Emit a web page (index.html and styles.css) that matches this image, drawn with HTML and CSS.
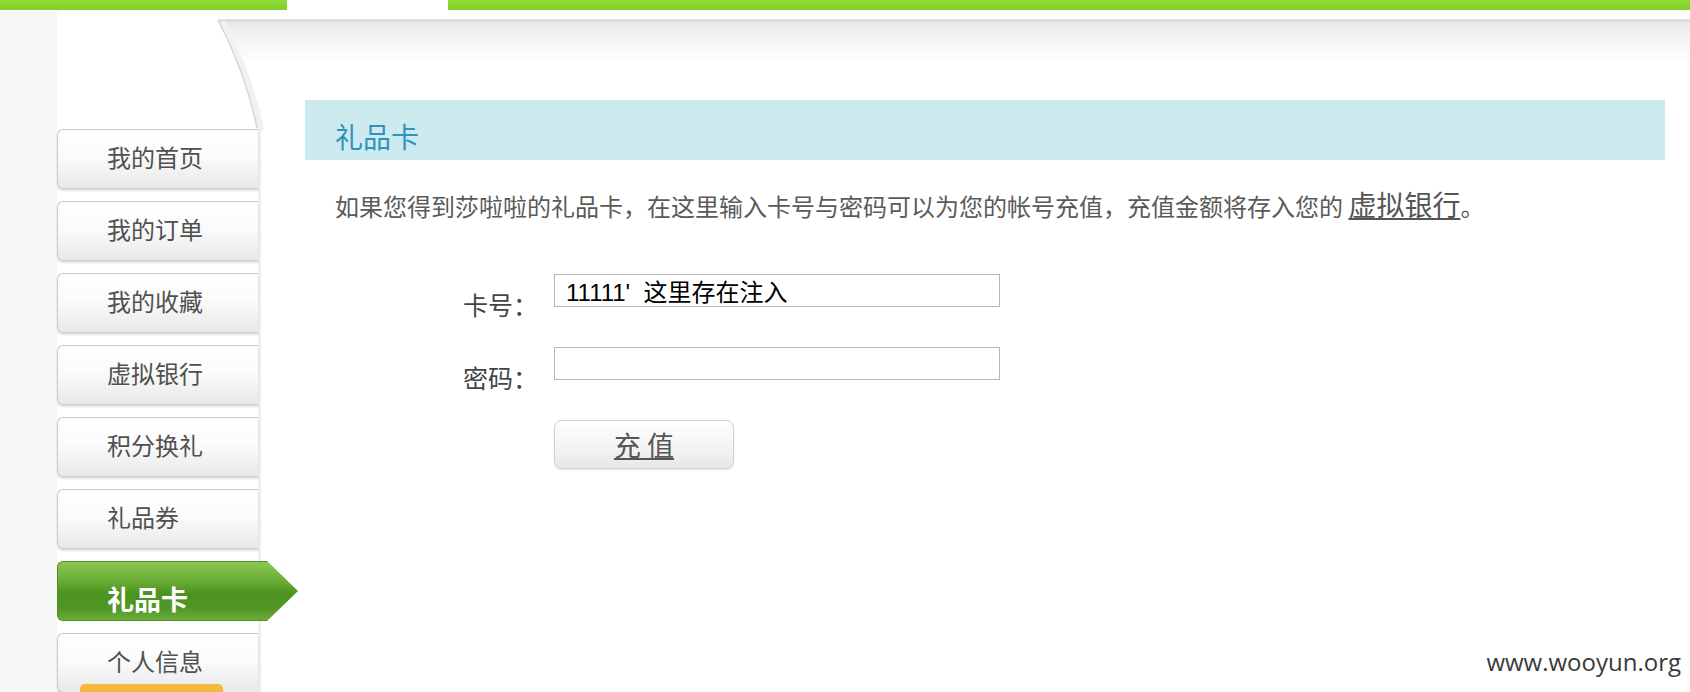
FILE: index.html
```html
<!DOCTYPE html>
<html lang="zh-CN">
<head>
<meta charset="utf-8">
<title>礼品卡</title>
<link rel="stylesheet" href="styles.css">
</head>
<body>
<div class="topbar"><div class="green green-left"></div><div class="green-gap"></div><div class="green green-right"></div></div>
<div class="stage">
  <svg class="tab" width="1633" height="130" viewBox="0 0 1633 130" aria-hidden="true">
    <defs>
      <linearGradient id="tabg" x1="0" y1="10" x2="0" y2="52" gradientUnits="userSpaceOnUse">
        <stop offset="0" stop-color="#d4d4d4"/>
        <stop offset="0.06" stop-color="#e9e9e9"/>
        <stop offset="0.35" stop-color="#f2f2f2"/>
        <stop offset="1" stop-color="#ffffff"/>
      </linearGradient>
    </defs>
    <path d="M161,10 L1633,10 L1633,130 L200,130 L200,118 Q189,64 161,10 Z" fill="url(#tabg)"/>
    <path d="M165,12 Q193,64 204,120" fill="none" stroke="#f1f1f1" stroke-width="6"/>
    <path d="M161,10 Q189,64 200,118" fill="none" stroke="#d6d6d6" stroke-width="1.6"/>
    <path d="M161,10 L1633,10" stroke="#d8d8d8" stroke-width="1.5"/>
  </svg>
  <div class="gutter"></div>
  <nav class="sidebar">
    <ul class="menu">
      <li class="item">我的首页</li>
      <li class="item">我的订单</li>
      <li class="item">我的收藏</li>
      <li class="item">虚拟银行</li>
      <li class="item">积分换礼</li>
      <li class="item">礼品券</li>
      <li class="item active">礼品卡</li>
      <li class="item">个人信息<span class="badge"></span></li>
    </ul>
  </nav>
  <main class="main">
    <div class="title-bar"><h2 class="title">礼品卡</h2></div>
    <p class="desc">如果您得到莎啦啦的礼品卡，在这里输入卡号与密码可以为您的帐号充值，充值金额将存入您的 <a class="link">虚拟银行</a>。</p>
    <form class="form">
      <div class="row"><label class="label">卡号：</label><input class="input" type="text" value="11111'  这里存在注入"></div>
      <div class="row"><label class="label">密码：</label><input class="input" type="text" value=""></div>
      <div class="row"><button class="btn" type="button">充&nbsp;值</button></div>
    </form>
  </main>
</div>
<div class="watermark">www.wooyun.org</div>
</body>
</html>
```
FILE: styles.css
```css
html, body {
  margin: 0;
  padding: 0;
  background: #fff;
}
body {
  position: relative;
  width: 1690px;
  height: 692px;
  overflow: hidden;
  font-family: "Noto Sans CJK SC", sans-serif;
}
.topbar {
  display: flex;
  height: 10px;
}
.green {
  background: linear-gradient(#8edc35, #80cf29);
}
.green-left { width: 287px; }
.green-gap { width: 161px; }
.green-right { flex: 1; }

.stage {
  position: relative;
  display: flex;
  height: 682px;
}
.tab {
  position: absolute;
  left: 57px;
  top: 0;
  z-index: 0;
}
.gutter {
  width: 57px;
  flex-shrink: 0;
  margin-top: 2px;
  background: #f6f6f6;
}
.sidebar {
  width: 204px;
  flex-shrink: 0;
  position: relative;
  z-index: 1;
  display: flex;
  flex-direction: column;
}
.menu {
  list-style: none;
  margin: 118px 0 0;
  padding: 1px 0 0;
  width: 201px;
  flex: 1;
  border-right: 3px solid #eeeeee;
  display: flex;
  flex-direction: column;
  gap: 12px;
}
.item {
  position: relative;
  flex-shrink: 0;
  box-sizing: border-box;
  height: 60px;
  width: 201px;
  display: flex;
  align-items: center;
  padding-left: 49px;
  padding-bottom: 6px;
  border: 1px solid #cacaca;
  border-right: 0;
  border-radius: 6px 0 0 6px;
  background: linear-gradient(#ffffff, #fbfbfb 45%, #e8e8e8);
  box-shadow: 0 2px 2px rgba(0, 0, 0, 0.13);
  font-size: 24px;
  color: #505050;
}
.item.active {
  width: 241px;
  padding-top: 14px;
  padding-bottom: 0;
  border-color: #4f8f26;
  background: linear-gradient(#8cc653 0%, #6bae36 32%, #4c9220 55%, #519726 80%, #6cad3d 100%);
  clip-path: polygon(0 0, 210px 0, 100% 50%, 210px 100%, 0 100%);
  box-shadow: none;
  color: #fff;
  font-weight: bold;
  font-size: 27px;
}
.badge {
  position: absolute;
  left: 22px;
  top: 50px;
  width: 143px;
  height: 20px;
  background: #f5b73c;
  border-radius: 5px 5px 0 0;
}

.main {
  flex: 1;
  position: relative;
  z-index: 1;
  padding: 90px 25px 0 44px;
}
.title-bar {
  height: 60px;
  box-sizing: border-box;
  padding: 22px 0 0 30px;
  background: #cdeaee;
}
.title {
  margin: 0;
  font-size: 28px;
  line-height: 28px;
  font-weight: normal;
  color: #2f93be;
}
.desc {
  margin: 31px 0 0 30px;
  height: 26px;
  font-size: 24px;
  line-height: 26px;
  color: #5a5a5a;
  white-space: nowrap;
}
.link {
  font-size: 28px;
  color: #555;
  text-decoration: underline;
}
.form {
  margin: 57px 0 0 158px;
}
.row {
  display: flex;
  align-items: flex-start;
  height: 73px;
}
.label {
  width: 91px;
  box-sizing: border-box;
  padding-top: 18px;
  font-size: 25px;
  line-height: 24px;
  color: #444;
}
.input {
  width: 446px;
  height: 33px;
  box-sizing: border-box;
  margin: 0;
  padding: 0 11px;
  border: 1px solid #b8b8b8;
  border-radius: 0;
  outline: none;
  background: #fff;
  font-family: "Liberation Sans Narrow", "Liberation Sans", "Noto Sans CJK SC", sans-serif;
  font-size: 24px;
  color: #000;
}
.btn {
  margin-left: 91px;
  width: 180px;
  height: 49px;
  padding: 0;
  border: 1px solid #d0d0d0;
  border-radius: 8px;
  background: linear-gradient(#ffffff, #f5f5f5 50%, #e7e7e7);
  box-shadow: 0 1px 2px rgba(0, 0, 0, 0.12);
  font-family: "Noto Sans CJK SC", sans-serif;
  font-size: 27px;
  color: #555;
  text-decoration: underline;
}
.watermark {
  position: absolute;
  right: 9px;
  top: 650px;
  font-family: "Open Sans", sans-serif;
  font-size: 24px;
  line-height: 24px;
  color: #3a3a3a;
}
```
